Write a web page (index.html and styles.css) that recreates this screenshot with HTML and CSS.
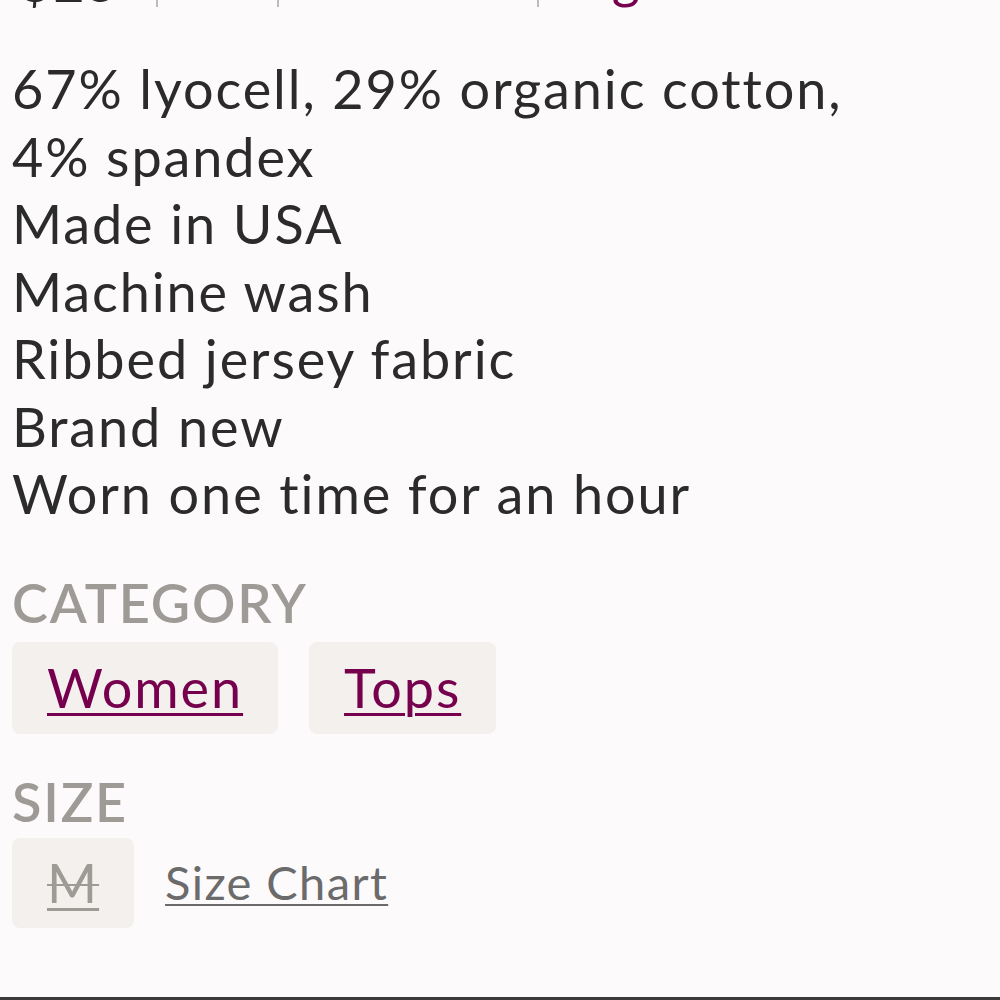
FILE: index.html
```html
<!DOCTYPE html>
<html lang="en">
<head>
<meta charset="utf-8">
<title>Listing details</title>
<link rel="stylesheet" href="styles.css">
</head>
<body>
<main class="page">
  <div class="meta">
    <span class="meta-item price">$25</span>
    <span class="meta-item muted size-meta">Size M</span>
    <span class="meta-item muted cond-meta">Like New</span>
    <a class="meta-item brand" href="#">Bag</a>
  </div>
  <p class="desc">67% lyocell, 29% organic cotton,<br>4% spandex<br>Made in USA<br>Machine wash<br>Ribbed jersey fabric<br>Brand new<br>Worn one time for an hour</p>
  <h3 class="label">CATEGORY</h3>
  <div class="chips">
    <a class="chip" href="#">Women</a>
    <a class="chip" href="#">Tops</a>
  </div>
  <h3 class="label label-size">SIZE</h3>
  <div class="size-row">
    <span class="chip chip-size"><s>M</s></span>
    <a class="size-chart" href="#">Size Chart</a>
  </div>
</main>
<div class="bottom-bar"></div>
</body>
</html>
```
FILE: styles.css
```css
html, body {
  margin: 0;
  background: #fcfafb;
}
body {
  font-family: Lato, "Open Sans", sans-serif;
  color: #2b2b2b;
  font-size: 54px;
  line-height: 67.5px;
  letter-spacing: 1.9px;
}
.page {
  padding: 0 12px;
}
.meta {
  display: flex;
  align-items: stretch;
  margin-top: -57px;
  white-space: nowrap;
  height: 64px;
}
.meta-item {
  padding: 0 20px;
  border-left: 2px solid #bdbabb;
  line-height: 78px;
}
.meta-item.price {
  border-left: none;
  padding: 0 36px 0 8px;
}
.muted {
  color: #555;
  font-size: 28px;
  line-height: 36px;
  box-sizing: border-box;
}
.size-meta { width: 121px; }
.cond-meta { width: 260px; }
.brand {
  color: #76004d;
  text-decoration: none;
  padding-left: 8px;
  line-height: 69px;
}
.desc {
  margin: 48px 0 0;
}
.label {
  margin: 41px 0 0;
  font-size: 54px;
  font-weight: 600;
  color: #9e9a96;
  line-height: 67.5px;
  letter-spacing: 1.8px;
}
.label-size {
  margin-top: 34px;
}
.chips, .size-row {
  display: flex;
  align-items: center;
  gap: 31px;
}
.chips { margin-top: 6px; }
.chip {
  display: inline-block;
  background: #f3f0ed;
  border-radius: 8px;
  padding: 12px 35px;
  color: #76004d;
  font-size: 54px;
  line-height: 68px;
  text-decoration: underline;
  text-decoration-thickness: 3px;
  text-underline-offset: 5px;
}
.chip-size {
  color: #9e9a96;
  padding: 11px 35px;
}
.chip-size s {
  text-decoration: line-through underline;
  text-decoration-thickness: 2px;
}
.size-chart {
  color: #6b6b6b;
  font-size: 47px;
  letter-spacing: 1.4px;
  text-decoration: underline;
  text-decoration-thickness: 2px;
  text-underline-offset: 4px;
}
.size-row { margin-top: 2px; }
.bottom-bar {
  position: fixed;
  left: 0;
  right: 0;
  bottom: 0;
  height: 3px;
  background: #3b3b3b;
}
```
